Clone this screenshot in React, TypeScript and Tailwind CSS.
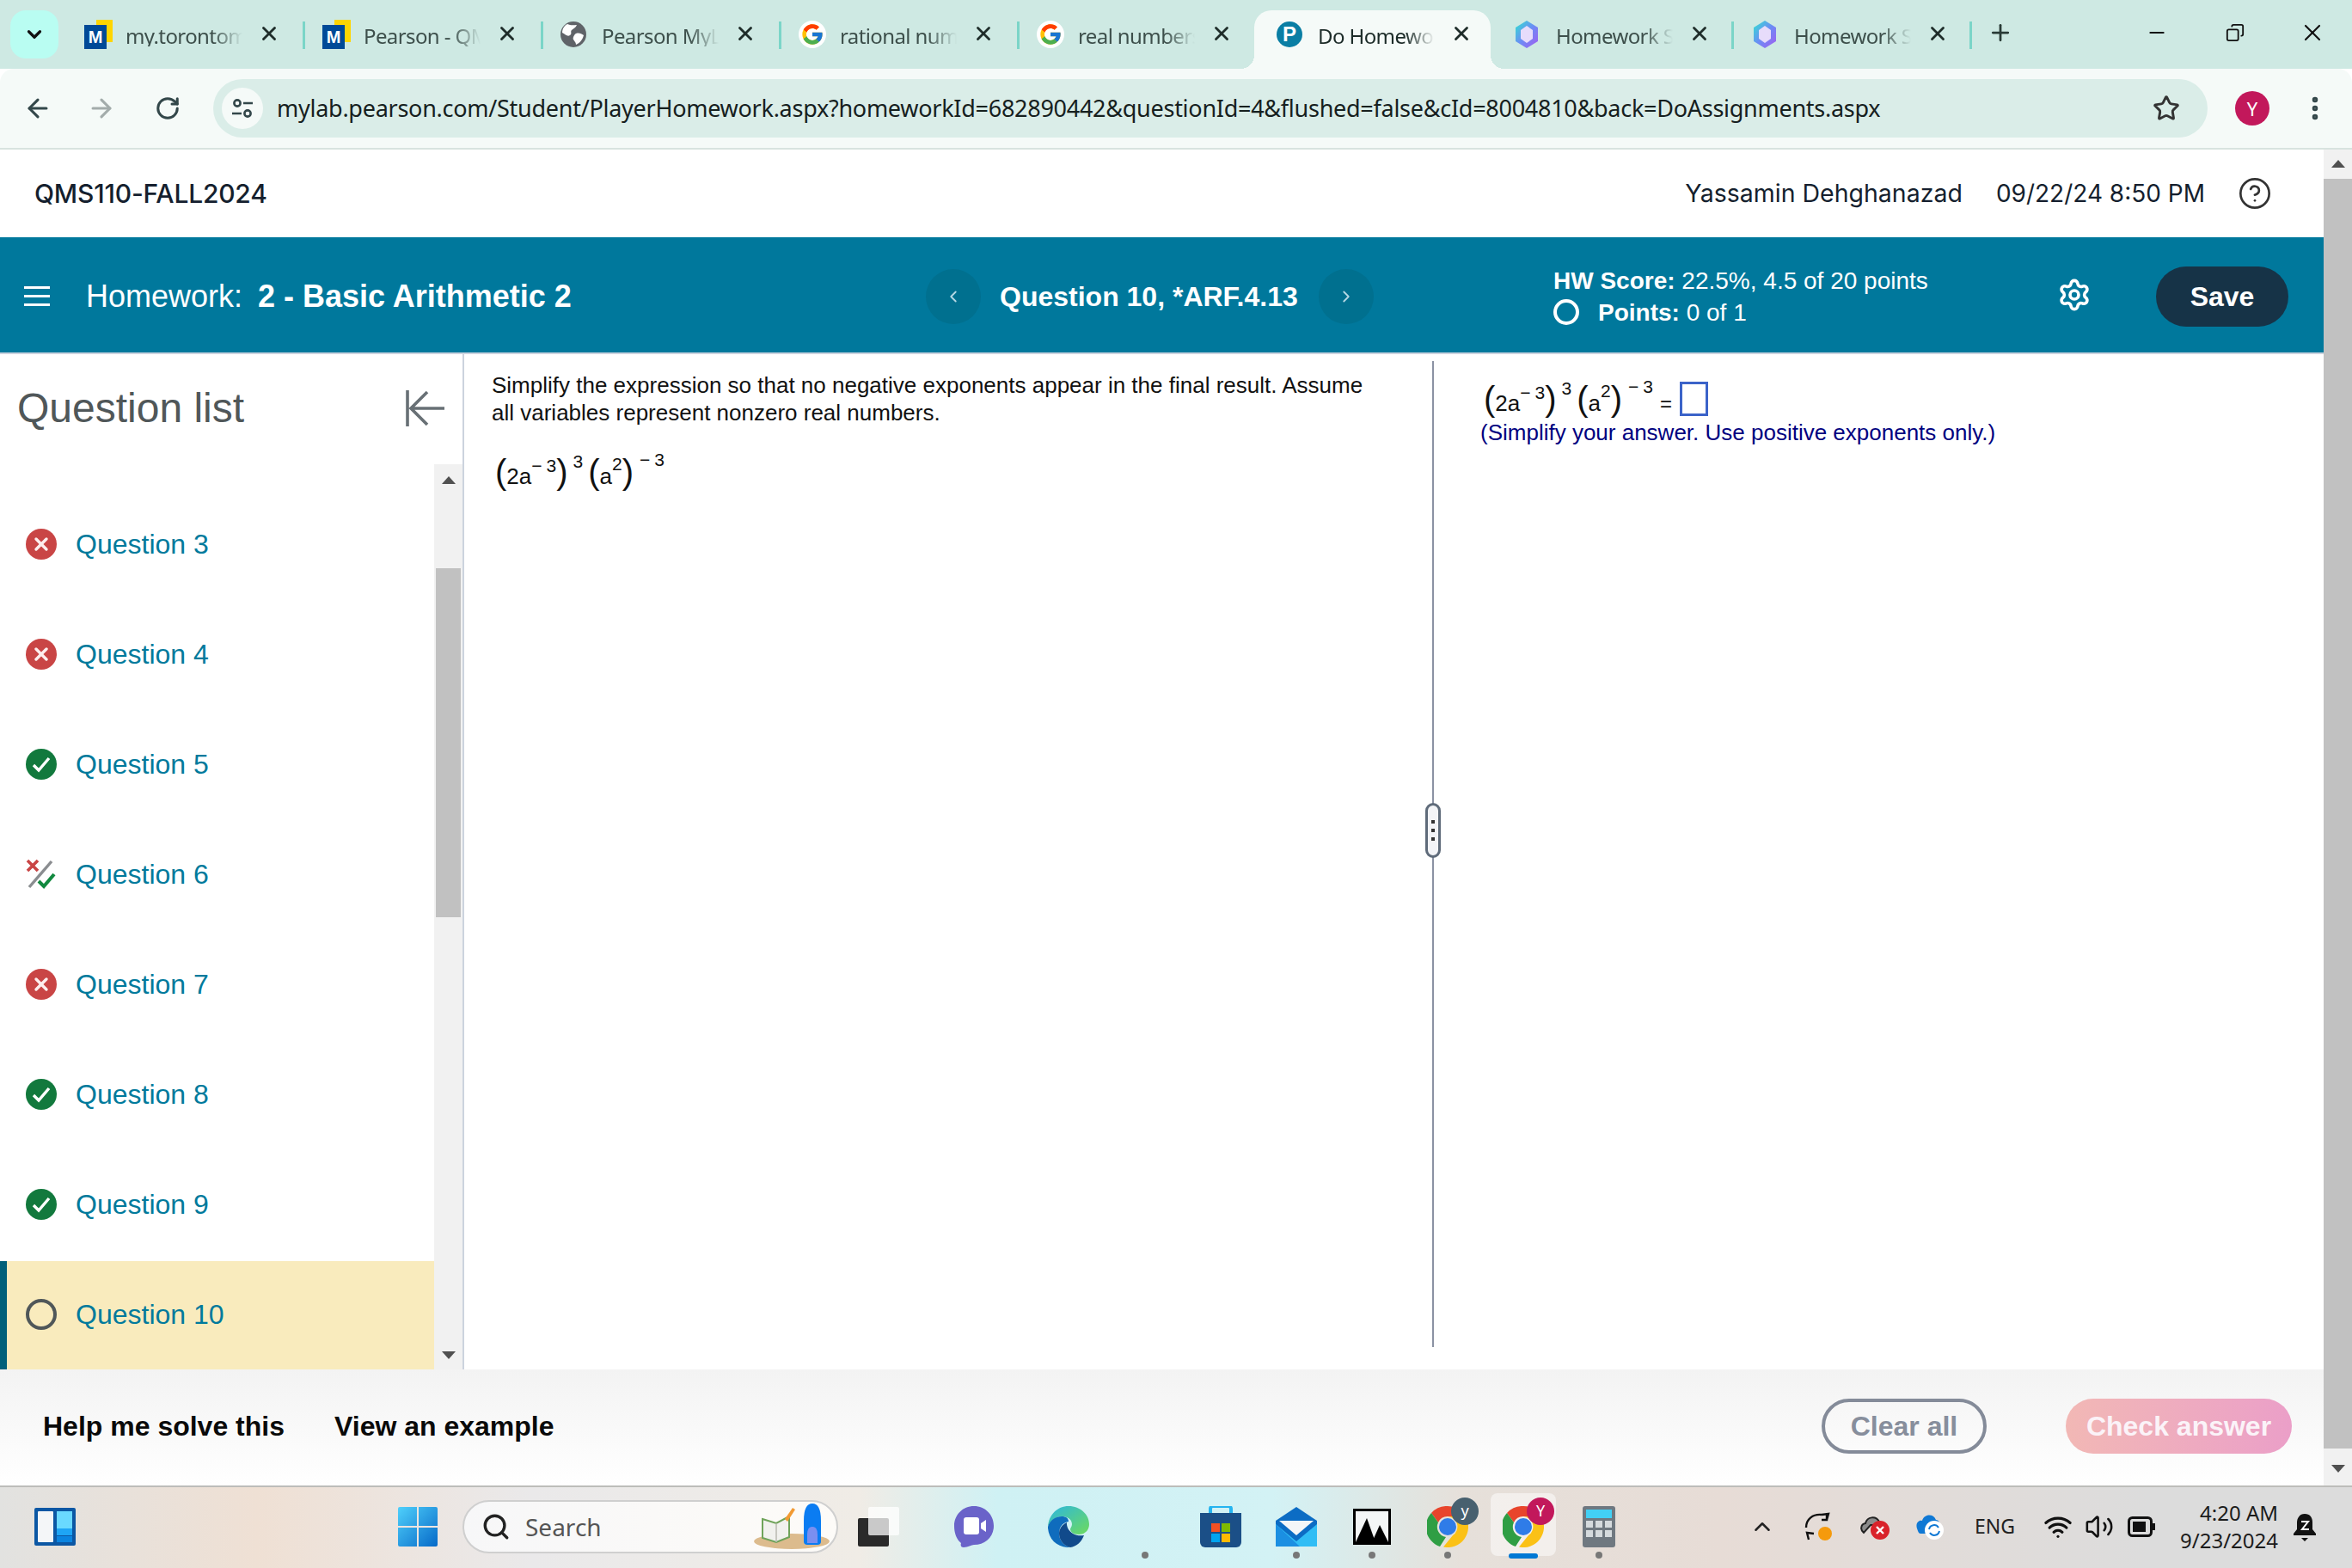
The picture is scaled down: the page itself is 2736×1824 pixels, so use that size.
import { ArrowLeft, ArrowRight, ChevronDown, ChevronLeft, ChevronRight, ChevronUp, CircleHelp, Copy, EllipsisVertical, Minus, Plus, RotateCw, Search, Settings, Star, Volume2, Wifi, X } from "lucide-react";
import { FcGoogle } from "react-icons/fc";

const sans = "font-['Liberation_Sans',Arial,sans-serif]";
const ui = "font-['Noto_Sans',sans-serif]";

const MyLabIcon = () => (
  <svg width="34" height="34" viewBox="0 0 34 34">
    <rect x="14" y="0" width="19" height="26" fill="#ffd500" />
    <rect x="0" y="6" width="26" height="28" fill="#004a97" />
    <text x="13" y="27" textAnchor="middle" fontFamily="Liberation Sans" fontWeight="700" fontSize="20" fill="#fff">M</text>
  </svg>
);

const GlobeIcon = () => (
  <svg width="30" height="30" viewBox="0 0 30 30">
    <circle cx="15" cy="15" r="15" fill="#5f6368" />
    <path d="M8 3c4 2 8 1 11 1-1 3-4 4-6 6s1 4-2 6-5-1-9-3c0-4 2-8 6-10zM18 14c4-1 6 0 9 2-1 4-4 9-9 11 0-3-2-4-3-6s1-6 3-7z" fill="#fff" />
  </svg>
);

const GoogleIcon = () => (
  <span className="flex h-[32px] w-[32px] items-center justify-center rounded-full bg-white">
    <FcGoogle size={28} />
  </span>
);

const PearsonIcon = () => (
  <span className={`flex h-[30px] w-[30px] items-center justify-center rounded-full bg-[#0a7ea4] text-[24px] font-bold text-white ${sans}`}>P</span>
);

const GemIcon = ({ id }: { id: string }) => (
  <svg width="28" height="32" viewBox="0 0 28 32">
    <defs>
      <linearGradient id={id} x1="0" y1="0" x2="1" y2="1">
        <stop offset="0" stopColor="#2fe5d0" />
        <stop offset="0.5" stopColor="#6c8cf5" />
        <stop offset="1" stopColor="#a45cf0" />
      </linearGradient>
    </defs>
    <path d="M14 0l13 8v16l-13 8-13-8V8z" fill={`url(#${id})`} />
    <path d="M14 6l7 5v10l-7 5-7-5V11z" fill="#e7dcfb" />
  </svg>
);

const tabs = [
  { title: "my.torontomu.ca", icon: <MyLabIcon /> },
  { title: "Pearson - QMS110", icon: <MyLabIcon /> },
  { title: "Pearson MyLab", icon: <GlobeIcon /> },
  { title: "rational numbers", icon: <GoogleIcon /> },
  { title: "real numbers", icon: <GoogleIcon /> },
  { title: "Do Homework", icon: <PearsonIcon />, active: true },
  { title: "Homework Solver", icon: <GemIcon id="gem1" /> },
  { title: "Homework Solver", icon: <GemIcon id="gem2" /> },
];

const Tab = ({ title, icon, active, sep, late }: { title: string; icon: React.ReactNode; active?: boolean; sep: boolean; late: boolean }) => (
  <div className={`relative flex h-[68px] w-[277px] shrink-0 items-center pb-[12px] ${late ? "pl-[22px]" : "pl-[20px]"} ${active ? "z-10" : ""}`}>
    {active && (
      <>
        <span className="absolute inset-y-0 left-[-4px] right-[6px] rounded-t-[20px] bg-[#f5faf8]" />
        <span className="absolute bottom-0 left-[-20px] h-[16px] w-[16px] bg-[radial-gradient(circle_at_0_0,transparent_16px,#f5faf8_16px)]" />
        <span className="absolute bottom-0 right-[-10px] h-[16px] w-[16px] bg-[radial-gradient(circle_at_100%_0,transparent_16px,#f5faf8_16px)]" />
      </>
    )}
    <span className="relative flex w-[48px] shrink-0 items-center">{icon}</span>
    <span className={`relative top-[2px] w-[136px] shrink-0 overflow-hidden whitespace-nowrap text-[24px] leading-none tracking-[-0.6px] [mask-image:linear-gradient(to_right,black_75%,transparent)] ${active ? "text-[#1c2b28]" : "text-[#3d4f4b]"} ${ui}`}>
      {title}
    </span>
    <X className="relative -top-[1px] ml-[18px] shrink-0 text-[#1f2d2a]" size={26} strokeWidth={2.6} />
    {sep && <span className="absolute right-0 top-[13px] h-[32px] w-[3px] bg-[#7bd5c8]" />}
  </div>
);

const BrowserChrome = () => (
  <div className="shrink-0">
    <div className="flex h-[80px] items-end bg-[#cee9e3]">
      <div className="mb-[12px] ml-[12px] mr-[10px] flex h-[56px] w-[56px] items-center justify-center rounded-[18px] bg-[#b9fdf2]">
        <ChevronDown size={26} strokeWidth={3} className="text-[#111]" />
      </div>
      {tabs.map((t, i) => (
        <Tab key={i} title={t.title} icon={t.icon} active={t.active} sep={i < 4 || i > 5} late={i >= 5} />
      ))}
      <div className="mb-[14px] ml-[18px] flex h-[56px] items-center">
        <Plus size={30} strokeWidth={2.2} className="text-[#2a3b37]" />
      </div>
      <div className="mb-[14px] ml-auto flex h-[56px] items-center pr-[30px] text-[#111]">
        <Minus size={26} strokeWidth={2} />
        <Copy size={22} strokeWidth={2} className="ml-[67px] -scale-x-100" />
        <X size={32} strokeWidth={1.6} className="ml-[63px]" />
      </div>
    </div>
    <div className="flex h-[94px] items-center rounded-t-[16px] border-b-2 border-[#d8e3df] bg-[#f5faf8] bg-clip-padding pl-[27px]">
      <ArrowLeft size={34} strokeWidth={2.2} className="text-[#33474a]" />
      <ArrowRight size={34} strokeWidth={2.2} className="ml-[40px] text-[#a3acab]" />
      <RotateCw size={30} strokeWidth={2.4} className="ml-[45px] text-[#33474a]" />
      <div className="ml-[38px] flex h-[68px] w-[2320px] items-center rounded-full bg-[#daede8] pl-[10px] pr-[32px]">
        <span className="flex h-[48px] w-[48px] items-center justify-center rounded-full bg-[#f5faf8]">
          <svg width="26" height="26" viewBox="0 0 26 26" fill="none" stroke="#33474a" strokeWidth="2.6">
            <circle cx="7" cy="7" r="3.6" />
            <path d="M14 7h11M1 19h11" />
            <circle cx="19" cy="19" r="3.6" />
          </svg>
        </span>
        <span className={`ml-[16px] whitespace-nowrap text-[27px] tracking-[-0.27px] text-[#16201e] ${ui}`}>
          mylab.pearson.com/Student/PlayerHomework.aspx?homeworkId=682890442&questionId=4&flushed=false&cId=8004810&back=DoAssignments.aspx
        </span>
        <Star size={32} strokeWidth={2.2} className="ml-auto text-[#333]" />
      </div>
      <span className={`ml-[32px] flex h-[40px] w-[40px] items-center justify-center rounded-full bg-[#c2185b] text-[22px] text-white ${ui}`}>Y</span>
      <EllipsisVertical size={34} strokeWidth={2.6} className="ml-[36px] text-[#33474a]" />
    </div>
  </div>
);

const Wrong = () => (
  <span className="flex h-[36px] w-[36px] items-center justify-center rounded-full bg-[#c94545]">
    <X size={24} strokeWidth={3.4} className="text-[#fdeeee]" />
  </span>
);

const Right = () => (
  <svg width="36" height="36" viewBox="0 0 36 36">
    <circle cx="18" cy="18" r="18" fill="#12793d" />
    <path d="M9 19l6 6 12-14" fill="none" stroke="#fff" strokeWidth="3.4" />
  </svg>
);

const Partial = () => (
  <svg width="36" height="36" viewBox="0 0 36 36" fill="none">
    <path d="M4 33L30 3" stroke="#8a8d90" strokeWidth="3.4" />
    <path d="M2 2l12 12M14 2L2 14" stroke="#c94545" strokeWidth="3.6" />
    <path d="M15 26l6 6 12-14" stroke="#12893f" strokeWidth="4" />
  </svg>
);

const Unanswered = ({ cls }: { cls: string }) => <span className={`block rounded-full border-[4px] ${cls}`} />;

const questions = [
  { n: 3, icon: <Wrong /> },
  { n: 4, icon: <Wrong /> },
  { n: 5, icon: <Right /> },
  { n: 6, icon: <Partial /> },
  { n: 7, icon: <Wrong /> },
  { n: 8, icon: <Right /> },
  { n: 9, icon: <Right /> },
];

const Arrow = ({ up }: { up?: boolean }) => (
  <span className={`block h-0 w-0 border-x-[8px] border-x-transparent ${up ? "border-b-[9px] border-b-[#505050]" : "border-t-[9px] border-t-[#505050]"}`} />
);

const QuestionRow = ({ n, icon }: { n: number; icon: React.ReactNode }) => (
  <div className="flex h-[128px] items-center pl-[30px]">
    <span className="w-[58px] shrink-0">{icon}</span>
    <span className={`text-[32px] text-[#007a9c] ${sans}`}>Question {n}</span>
  </div>
);

const Sidebar = () => (
  <aside className="flex w-[540px] shrink-0 flex-col border-r-2 border-[#ccd3de]">
    <div className="flex h-[128px] shrink-0 items-start pl-[20px] pt-[27px]">
      <span className={`text-[48px] leading-[72px] text-[#505759] ${sans}`}>Question list</span>
      <svg className="ml-[187px] mt-[15px]" width="48" height="42" viewBox="0 0 48 42" fill="none" stroke="#687075" strokeWidth="3.6">
        <path d="M3 0v42M46 21H8M26 2L7 21l19 19" />
      </svg>
    </div>
    <div className="flex min-h-0 flex-1">
      <div className="flex-1 overflow-hidden pt-[29px]">
        {questions.map((q) => (
          <QuestionRow key={q.n} n={q.n} icon={q.icon} />
        ))}
        <div className="mt-[2px] flex h-[126px] items-center border-l-[8px] border-[#00607a] bg-[#f9ebbd] pb-[2px] pl-[22px]">
          <span className="w-[58px] shrink-0">
            <Unanswered cls="h-[36px] w-[36px] border-[#505759]" />
          </span>
          <span className={`text-[32px] text-[#007a9c] ${sans}`}>Question 10</span>
        </div>
      </div>
      <div className="flex w-[33px] shrink-0 flex-col items-center bg-[#f1f1f1] pt-[14px]">
        <Arrow up />
        <div className="mt-[98px] h-[406px] w-[29px] bg-[#c1c1c1]" />
        <div className="mt-auto pb-[12px]">
          <Arrow />
        </div>
      </div>
    </div>
  </aside>
);

// the stacked exponents of (2a^-3)^3 (a^2)^-3
const Expression = () => (
  <span className={`whitespace-nowrap text-[26px] leading-none text-[#111] ${sans}`}>
    <span className="text-[40px]">(</span>
    2a
    <span className="align-[14px] text-[21px]">−<span className="ml-[5px]">3</span></span>
    <span className="text-[40px]">)</span>
    <span className="ml-[6px] align-[19px] text-[21px]">3</span>
    <span className="ml-[6px] text-[40px]">(</span>
    a
    <span className="align-[16px] text-[21px]">2</span>
    <span className="text-[40px]">)</span>
    <span className="ml-[7px] align-[21px] text-[21px]">−<span className="ml-[5px]">3</span></span>
  </span>
);

const Workspace = () => (
  <div className="flex min-w-0 flex-1 bg-white pb-[26px] pt-[8px]">
    <div className="w-[1126px] shrink-0 pl-[32px] pr-[70px] pt-[12px]">
      <p className={`text-[26px] leading-[32px] text-[#111] ${sans}`}>
        Simplify the expression so that no negative exponents appear in the final result. Assume all variables represent nonzero real numbers.
      </p>
      <div className="ml-[4px] mt-[28px] h-[50px]">
        <Expression />
      </div>
    </div>
    <div className="relative w-[2px] shrink-0 bg-[#8b92a3]">
      <div className="absolute left-[-8px] top-[514px] flex h-[64px] w-[18px] flex-col items-center justify-center gap-[6px] rounded-full border-[3px] border-[#5f6b7a] bg-[#f3f4f7]">
        <span className="h-[4px] w-[4px] bg-[#333]" />
        <span className="h-[4px] w-[4px] bg-[#333]" />
        <span className="h-[4px] w-[4px] bg-[#333]" />
      </div>
    </div>
    <div className="flex-1 pl-[58px] pt-[20px]">
      <div className="flex h-[44px] items-end">
        <Expression />
        <span className={`ml-[8px] pb-[2px] text-[24px] leading-none text-[#111] ${sans}`}>=</span>
        <span className="ml-[9px] h-[40px] w-[33px] border-[3px] border-[#3b63c9]" />
      </div>
      <p className={`-ml-[4px] mt-[3px] text-[26px] leading-[32px] text-[#000080] ${sans}`}>(Simplify your answer. Use positive exponents only.)</p>
    </div>
  </div>
);

const TealBar = () => (
  <div className={`flex h-[136px] shrink-0 items-center border-b-2 border-[#ccd3de] bg-[#00789c] pt-[3px] text-white ${sans}`}>
    <div className="ml-[28px] flex w-[30px] flex-col gap-[7px]">
      <span className="h-[3px] bg-white" />
      <span className="h-[3px] bg-white" />
      <span className="h-[3px] bg-white" />
    </div>
    <div className="ml-[42px] w-[977px] shrink-0 whitespace-nowrap text-[36px]">
      Homework:<span className="ml-[18px] font-bold">2 - Basic Arithmetic 2</span>
    </div>
    <span className="flex h-[64px] w-[64px] items-center justify-center rounded-full bg-[#00708f]">
      <ChevronLeft size={22} className="text-[#b5d8e4]" />
    </span>
    <span className="ml-[22px] w-[347px] whitespace-nowrap text-[32px] font-bold">Question 10, *ARF.4.13</span>
    <span className="ml-[24px] flex h-[64px] w-[64px] items-center justify-center rounded-full bg-[#00708f]">
      <ChevronRight size={22} className="text-[#b5d8e4]" />
    </span>
    <div className="ml-[209px] text-[28px] leading-[37px]">
      <div><b>HW Score:</b> 22.5%, 4.5 of 20 points</div>
      <div className="flex items-center">
        <Unanswered cls="h-[30px] w-[30px] border-white" />
        <span className="ml-[22px]"><b>Points:</b> 0 of 1</span>
      </div>
    </div>
    <Settings size={40} strokeWidth={2.2} className="ml-auto -translate-y-[2px]" />
    <span className="ml-[75px] mr-[41px] flex h-[70px] w-[154px] items-center justify-center rounded-full bg-[#163347] text-[32px] font-bold">Save</span>
  </div>
);

const Footer = () => (
  <div className={`flex h-[135px] shrink-0 items-center bg-gradient-to-b from-[#f3f3f3] to-white pb-[3px] text-[32px] font-bold ${sans}`}>
    <span className="ml-[50px] text-[#0a0a0a]">Help me solve this</span>
    <span className="ml-[58px] text-[#0a0a0a]">View an example</span>
    <span className="ml-auto flex h-[64px] w-[192px] items-center justify-center rounded-full border-[4px] border-[#848b99] text-[#878e9c]">Clear all</span>
    <span className="ml-[92px] mr-[37px] flex h-[64px] w-[263px] items-center justify-center rounded-full bg-gradient-to-r from-[#f2b8b5] to-[#eb9fc8] text-[#fbf3f8]">Check answer</span>
  </div>
);

const ChromeIcon = ({ badge, badgeColor }: { badge: string; badgeColor: string }) => (
  <span className="relative block h-[48px] w-[48px]">
    <svg width="48" height="48" viewBox="0 0 48 48">
      <path d="M24 0a24 24 0 0 1 20.8 12H24a12 12 0 0 0-11 7L5 8A24 24 0 0 1 24 0z" fill="#e8452c" />
      <path d="M5 8l8 11a12 12 0 0 0 9 17l-7 11A24 24 0 0 1 5 8z" fill="#2f9e44" />
      <path d="M24 12h20.8A24 24 0 0 1 19 47.5L30 34a12 12 0 0 0-6-22z" fill="#fbc116" />
      <circle cx="24" cy="24" r="10" fill="#2f7ce8" />
    </svg>
    <span className={`absolute -right-[12px] -top-[10px] flex h-[32px] w-[32px] items-center justify-center rounded-full text-[18px] text-white ${badgeColor} ${ui}`}>{badge}</span>
  </span>
);

const TaskCell = ({ width, dot, active, children }: { width: string; dot?: boolean; active?: boolean; children?: React.ReactNode }) => (
  <div className={`relative flex h-full shrink-0 items-center justify-center ${width}`}>
    {active && <span className="absolute inset-x-[6px] bottom-[11px] top-[7px] rounded-[8px] bg-white/50" />}
    <span className="relative">{children}</span>
    {dot && <span className="absolute bottom-[8px] left-1/2 h-[8px] w-[8px] -translate-x-1/2 rounded-full bg-[#777]" />}
    {active && <span className="absolute bottom-[8px] left-1/2 h-[6px] w-[34px] -translate-x-1/2 rounded-full bg-[#0078d4]" />}
  </div>
);

const Taskbar = () => (
  <div className={`flex h-[96px] shrink-0 items-center border-t-2 border-[#bdbdba] bg-[linear-gradient(90deg,#e2e2e0_0,#efe0d4_300px,#eae9ea_620px,#f0ece6_1000px,#cff1f4_1160px,#d3f2f5_1480px,#e6e0da_1700px,#e7dcd6_2000px,#dcdcdc_2500px)] pb-[3px] ${ui}`}>
    <svg className="ml-[40px]" width="48" height="44" viewBox="0 0 48 44">
      <rect width="48" height="44" rx="2" fill="#0b57a4" />
      <rect x="4" y="4" width="18" height="36" rx="1" fill="#f4f6f8" />
      <rect x="26" y="4" width="18" height="20" fill="#6ad9ff" />
      <rect x="26" y="24" width="18" height="8" fill="#1ea5f5" />
      <rect x="26" y="33" width="18" height="7" fill="#0a84e0" />
    </svg>
    <svg className="ml-[375px]" width="46" height="46" viewBox="0 0 46 46">
      <defs>
        <linearGradient id="win" x1="0" y1="0" x2="1" y2="1">
          <stop offset="0" stopColor="#4fd0fb" />
          <stop offset="1" stopColor="#0669c8" />
        </linearGradient>
      </defs>
      <path d="M0 2a2 2 0 0 1 2-2h20v22H0zM24 0h20a2 2 0 0 1 2 2v20H24zM0 24h22v22H2a2 2 0 0 1-2-2zM24 24h22v20a2 2 0 0 1-2 2H24z" fill="url(#win)" />
    </svg>
    <div className="relative ml-[29px] flex h-[62px] w-[437px] shrink-0 items-center rounded-full border-[2px] border-[#cfcfcf] bg-gradient-to-r from-[#f7f7f8] to-[#fdfbf8] pl-[20px]">
      <Search size={34} strokeWidth={2.4} className="text-[#222]" />
      <span className="ml-[17px] text-[28px] text-[#555]">Search</span>
      <svg className="absolute right-[6px] top-[2px]" width="90" height="54" viewBox="0 0 90 54">
        <ellipse cx="44" cy="44" rx="44" ry="9" fill="#dcbb8d" />
        <path d="M10 18l16 5 15-8v24l-15 6-16-5z" fill="#f1f1ee" stroke="#6fa35a" strokeWidth="2" />
        <path d="M26 23v22" stroke="#b8b8b0" strokeWidth="1.5" />
        <path d="M36 18l9-13 3 2-9 14z" fill="#f29a32" />
        <path d="M58 20q0-20 10-20t10 20v24q0 4-4 4H62q-4 0-4-4z" fill="#0b7cf2" />
        <path d="M62 46V36q0-9 6-9t6 9v10z" fill="#7a8ff0" />
      </svg>
    </div>
    <TaskCell width="w-[93px]">
      <span className="relative block h-[46px] w-[48px]">
        <span className="absolute bottom-0 left-0 h-[33px] w-[36px] rounded-[2px] bg-[#2a2a2a]" />
        <span className="absolute right-0 top-0 h-[33px] w-[36px] rounded-[2px] bg-white/75" />
      </span>
    </TaskCell>
    <TaskCell width="w-[130px]">
      <svg width="46" height="48" viewBox="0 0 46 48">
        <path d="M23 0c13 0 23 10 23 23s-10 22-23 22c-3 0-7 3-12 3-3 0-4-2-3-5-5-4-8-11-8-20C0 10 10 0 23 0z" fill="#6a63c9" />
        <rect x="11" y="13" width="18" height="20" rx="3" fill="#fff" />
        <path d="M31 20l6-4v14l-6-4z" fill="#fff" />
      </svg>
    </TaskCell>
    <TaskCell width="w-[90px]">
      <svg width="48" height="48" viewBox="0 0 48 48">
        <defs>
          <linearGradient id="edge" x1="0" y1="0" x2="1" y2="1">
            <stop offset="0" stopColor="#2cb6e0" />
            <stop offset="1" stopColor="#6edb5c" />
          </linearGradient>
        </defs>
        <path d="M24 0c14 0 24 10 24 21 0 7-5 12-12 12-6 0-10-3-10-6 0-2 2-3 2-6 0-6-6-9-12-9C9 12 2 18 0 24 1 10 11 0 24 0z" fill="url(#edge)" />
        <path d="M0 24c2-7 8-12 16-12 5 0 8 2 8 6-7 1-11 7-11 14 0 7 5 14 13 16C11 49 0 38 0 24z" fill="#0f6cbd" />
        <path d="M26 48c-8-2-13-9-13-16 0-6 4-11 9-13-1 9 8 17 20 15-3 8-9 13-16 14z" fill="#114a8b" />
      </svg>
    </TaskCell>
    <TaskCell width="w-[88px]" dot />
    <TaskCell width="w-[88px]">
      <svg width="48" height="48" viewBox="0 0 48 48">
        <path d="M12 10V3a3 3 0 0 1 3-3h18a3 3 0 0 1 3 3v7" fill="none" stroke="#25b4f0" strokeWidth="4" />
        <path d="M0 8h48v34a6 6 0 0 1-6 6H6a6 6 0 0 1-6-6z" fill="#1b4f87" />
        <rect x="13" y="20" width="10" height="10" fill="#f25022" />
        <rect x="25" y="20" width="10" height="10" fill="#7fba00" />
        <rect x="13" y="32" width="10" height="10" fill="#00a4ef" />
        <rect x="25" y="32" width="10" height="10" fill="#ffb900" />
      </svg>
    </TaskCell>
    <TaskCell width="w-[88px]" dot>
      <svg width="48" height="46" viewBox="0 0 48 46">
        <path d="M24 0l24 16v30H0V16z" fill="#0c6cc4" />
        <path d="M4 16h40L24 33z" fill="#f4f6f8" />
        <path d="M48 20v26H0V20l24 20z" fill="#30bdf5" />
        <path d="M0 20l28 26H0z" fill="#1b8fe2" />
      </svg>
    </TaskCell>
    <TaskCell width="w-[88px]" dot>
      <svg width="44" height="42" viewBox="0 0 44 42">
        <rect width="44" height="42" fill="#000" />
        <rect x="3" y="3" width="38" height="36" fill="#f4f6f6" />
        <path d="M3 39l13-28 10 28z" fill="#000" />
        <path d="M22 39l9-20 10 20z" fill="#000" />
      </svg>
    </TaskCell>
    <TaskCell width="w-[88px]" dot>
      <ChromeIcon badge="y" badgeColor="bg-[#47606f]" />
    </TaskCell>
    <TaskCell width="w-[88px]" active>
      <ChromeIcon badge="Y" badgeColor="bg-[#c2185b]" />
    </TaskCell>
    <TaskCell width="w-[88px]" dot>
      <svg width="38" height="48" viewBox="0 0 38 48">
        <rect width="38" height="48" rx="3" fill="#6f7880" />
        <rect x="4" y="4" width="30" height="10" fill="#42d0f5" />
        <g fill="#d5dadd">
          <rect x="4" y="17" width="8" height="8" />
          <rect x="15" y="17" width="8" height="8" />
          <rect x="26" y="17" width="8" height="8" />
          <rect x="4" y="28" width="8" height="8" />
          <rect x="15" y="28" width="8" height="8" />
          <rect x="26" y="28" width="8" height="8" />
        </g>
      </svg>
    </TaskCell>
    <ChevronUp size={30} strokeWidth={2} className="ml-[131px] text-[#222]" />
    <svg className="ml-[34px]" width="34" height="34" viewBox="0 0 34 34" fill="none" stroke="#111" strokeWidth="2.4">
      <path d="M2 18C2 8 10 2 20 3M20 3l8-1-2 7M26 3v6h-6M5 32l-2-8 8 1" />
      <circle cx="24" cy="25" r="8" fill="#f59a0c" stroke="none" />
    </svg>
    <svg className="ml-[31px]" width="34" height="30" viewBox="0 0 34 30">
      <path d="M4 22c-4-3-4-10 2-11 2-8 12-9 16-2 2 1 3 2 4 4H12z" fill="#8c8c8c" stroke="#222" strokeWidth="2" />
      <circle cx="23" cy="19" r="11" fill="#d9222a" />
      <path d="M19 15l8 8M27 15l-8 8" stroke="#fff" strokeWidth="2.4" />
    </svg>
    <svg className="ml-[30px]" width="34" height="32" viewBox="0 0 34 32">
      <path d="M2 18C0 12 4 8 8 9c2-8 13-9 16-1 2 0 3 1 4 3L14 24H6c-2 0-3-3-4-6z" fill="#0f78d4" />
      <circle cx="22" cy="20" r="11" fill="#fff" />
      <path d="M16 19a6 6 0 0 1 11-2M28 21a6 6 0 0 1-11 2" fill="none" stroke="#0f78d4" strokeWidth="2" />
    </svg>
    <span className="ml-[35px] text-[23px] text-[#222]">ENG</span>
    <Wifi size={34} strokeWidth={2.2} className="ml-[33px] text-[#111]" />
    <Volume2 size={34} strokeWidth={1.8} className="ml-[14px] text-[#111]" />
    <svg className="ml-[16px]" width="32" height="24" viewBox="0 0 32 24">
      <rect x="1.5" y="1.5" width="26" height="21" rx="4" fill="none" stroke="#111" strokeWidth="3" />
      <rect x="6" y="6" width="15" height="12" fill="#111" />
      <rect x="29" y="8" width="3" height="8" fill="#111" />
    </svg>
    <div className="ml-auto text-right text-[24px] leading-[32px] text-[#1b1b1b]">
      <div>4:20 AM</div>
      <div>9/23/2024</div>
    </div>
    <svg className="ml-[18px] mr-[40px]" width="28" height="34" viewBox="0 0 28 34">
      <path d="M13 2c-6 0-9 5-9 10v8l-4 5v2h26v-2l-4-5v-8c0-6-3-10-9-10z" fill="#111" />
      <path d="M9 30h8l-4 4z" fill="#111" />
      <path d="M9 11h8l-7 9h8" fill="none" stroke="#fff" strokeWidth="2" />
    </svg>
  </div>
);

export default function App() {
  return (
    <div className="flex h-screen w-full flex-col overflow-hidden bg-white">
      <BrowserChrome />
      <div className="flex min-h-0 flex-1">
        <div className="flex min-w-0 flex-1 flex-col">
          <div className="flex h-[102px] shrink-0 items-center pl-[40px] pr-[60px] font-['Inter',sans-serif] text-[28.5px] text-[#151f2e]">
            <span className="text-[30px] font-medium tracking-[-0.2px]">QMS110-FALL2024</span>
            <span className="ml-auto">Yassamin Dehghanazad</span>
            <span className="ml-[39px] text-[28px]">09/22/24 8:50 PM</span>
            <CircleHelp size={40} strokeWidth={1.6} className="ml-[38px] text-[#333]" />
          </div>
          <TealBar />
          <div className="flex min-h-0 flex-1">
            <Sidebar />
            <Workspace />
          </div>
          <Footer />
        </div>
        <div className="flex w-[33px] shrink-0 flex-col items-center bg-[#f1f1f1] pt-[12px]">
          <Arrow up />
          <div className="mt-[13px] h-[1477px] w-full bg-[#c1c1c1]" />
          <div className="mt-auto pb-[15px]">
            <Arrow />
          </div>
        </div>
      </div>
      <Taskbar />
    </div>
  );
}
